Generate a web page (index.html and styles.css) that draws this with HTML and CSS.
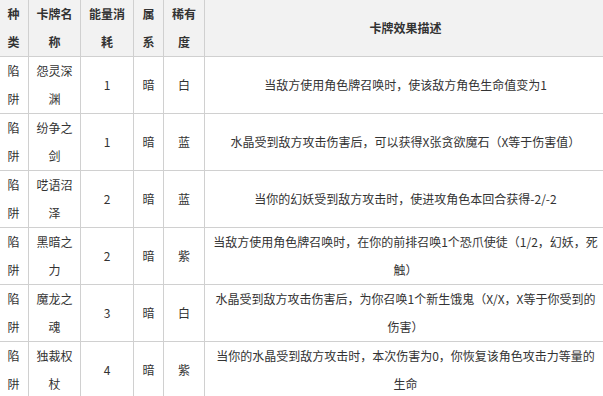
FILE: index.html
```html
<!DOCTYPE html>
<html lang="zh-CN">
<head>
<meta charset="utf-8">
<title>陷阱卡牌</title>
<link rel="stylesheet" href="styles.css">
</head>
<body>
<table class="cards">
  <colgroup>
    <col class="c-type">
    <col class="c-name">
    <col class="c-cost">
    <col class="c-attr">
    <col class="c-rare">
    <col class="c-desc">
  </colgroup>
  <thead>
    <tr>
      <th>种类</th>
      <th>卡牌名称</th>
      <th>能量消耗</th>
      <th>属系</th>
      <th>稀有度</th>
      <th>卡牌效果描述</th>
    </tr>
  </thead>
  <tbody>
    <tr><td>陷阱</td><td>怨灵深渊</td><td>1</td><td>暗</td><td>白</td><td>当敌方使用角色牌召唤时，使该敌方角色生命值变为1</td></tr>
    <tr><td>陷阱</td><td>纷争之剑</td><td>1</td><td>暗</td><td>蓝</td><td>水晶受到敌方攻击伤害后，可以获得X张贪欲魔石（X等于伤害值）</td></tr>
    <tr><td>陷阱</td><td>呓语沼泽</td><td>2</td><td>暗</td><td>蓝</td><td>当你的幻妖受到敌方攻击时，使进攻角色本回合获得-2/-2</td></tr>
    <tr><td>陷阱</td><td>黑暗之力</td><td>2</td><td>暗</td><td>紫</td><td>当敌方使用角色牌召唤时，在你的前排召唤1个恐爪使徒（1/2，幻妖，死触）</td></tr>
    <tr><td>陷阱</td><td>魔龙之魂</td><td>3</td><td>暗</td><td>白</td><td>水晶受到敌方攻击伤害后，为你召唤1个新生饿鬼（X/X，X等于你受到的伤害）</td></tr>
    <tr><td>陷阱</td><td>独裁权杖</td><td>4</td><td>暗</td><td>紫</td><td>当你的水晶受到敌方攻击时，本次伤害为0，你恢复该角色攻击力等量的生命</td></tr>
  </tbody>
</table>
</body>
</html>
```

FILE: styles.css
```css
html, body {
  margin: 0;
  padding: 0;
  background: #ffffff;
  overflow: hidden;
}

.cards {
  border-collapse: collapse;
  table-layout: fixed;
  width: 609px;
  margin: -1px 0 0 -2px;
  font-family: "Noto Sans CJK SC", "Microsoft YaHei", sans-serif;
  font-size: 12px;
  line-height: 28px;
  color: #333333;
}

.c-type { width: 30px; }
.c-name { width: 52px; }
.c-cost { width: 53px; }
.c-attr { width: 30px; }
.c-rare { width: 41px; }
.c-desc { width: auto; }

.cards th,
.cards td {
  border: 1px solid #d0d0d0;
  padding: 0 6px;
  text-align: center;
  vertical-align: middle;
  word-break: break-all;
}

.cards th {
  background: #f2f2f2;
  font-weight: bold;
  height: 56px;
}

.cards td {
  height: 56px;
}
```
